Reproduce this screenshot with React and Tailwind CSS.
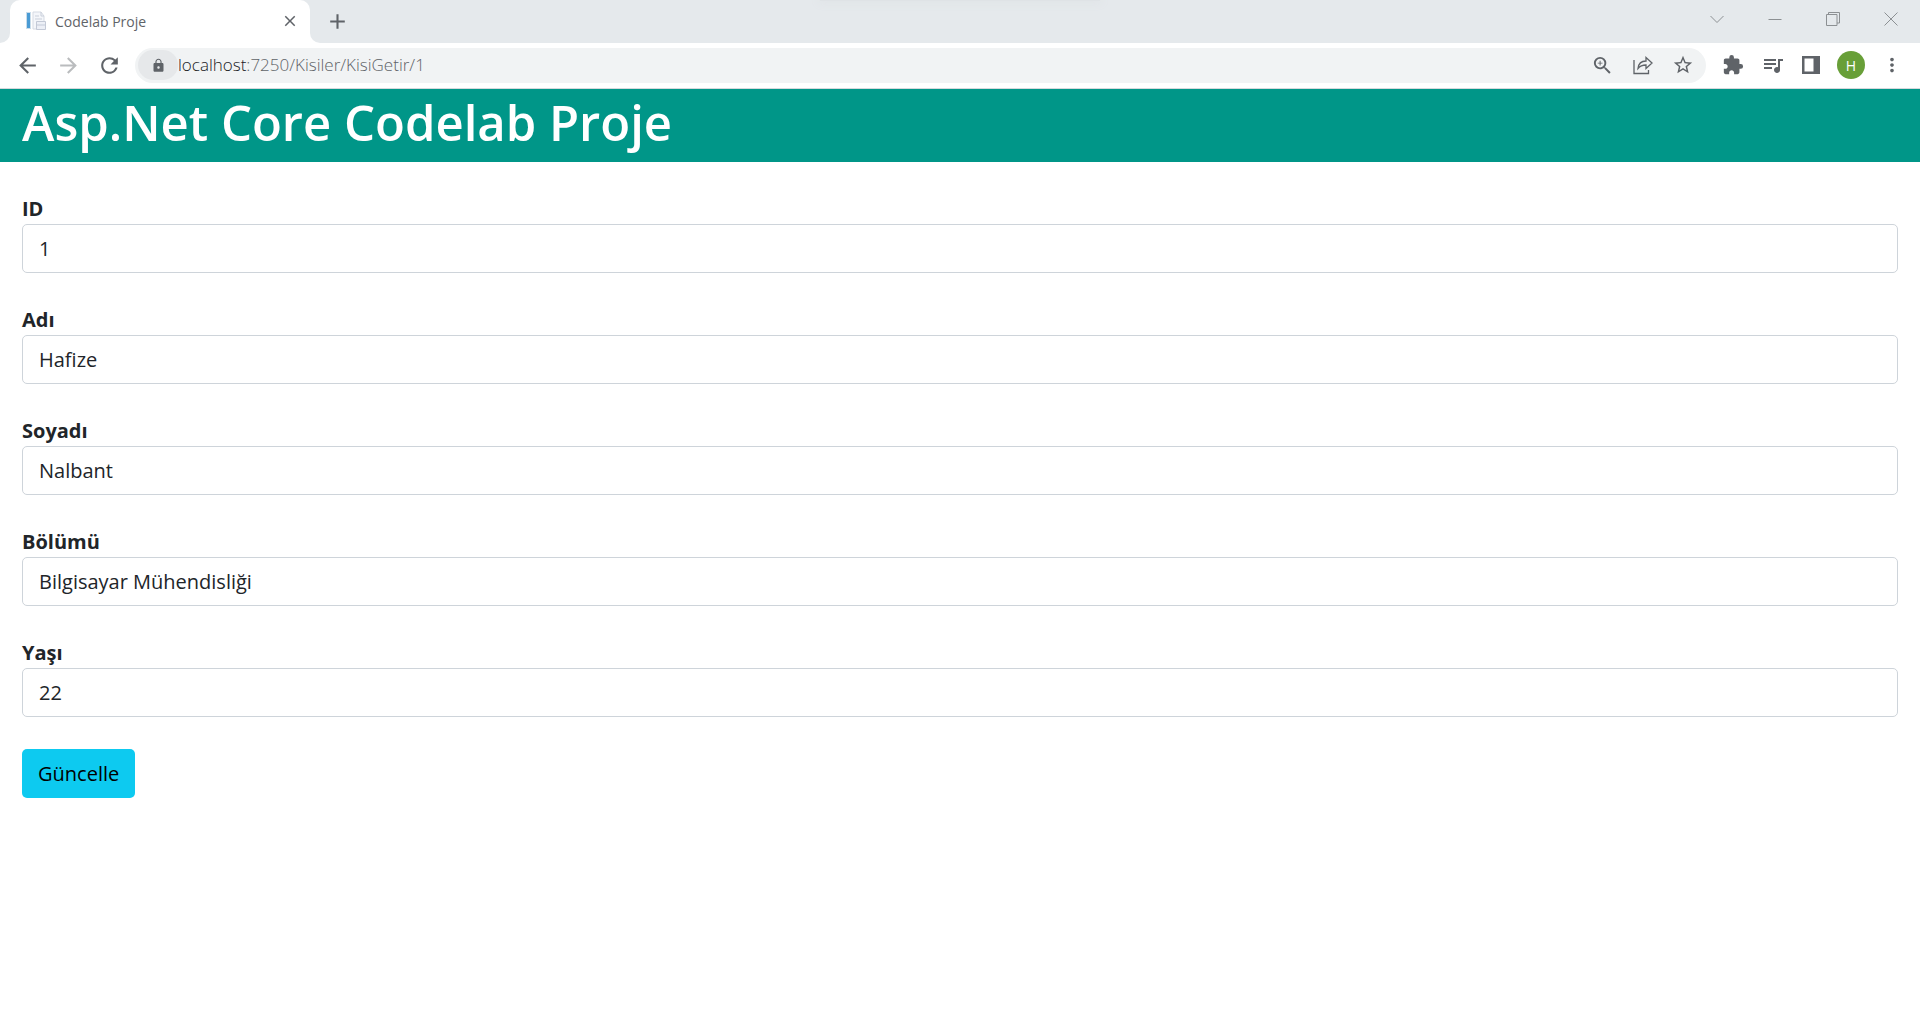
import React from "react";
import {
  MdArrowBack, MdArrowForward, MdRefresh, MdLock, MdZoomIn, MdStarBorder,
  MdExtension, MdQueueMusic, MdMoreVert, MdClose, MdAdd,
} from "react-icons/md";

const fields = [
  { id: "id", label: "ID", value: "1" },
  { id: "adi", label: "Adı", value: "Hafize" },
  { id: "soyadi", label: "Soyadı", value: "Nalbant" },
  { id: "bolumu", label: "Bölümü", value: "Bilgisayar Mühendisliği" },
  { id: "yasi", label: "Yaşı", value: "22" },
];

function Favicon() {
  return (
    <svg className="size-5 shrink-0" viewBox="0 0 20 20" fill="none">
      <rect x="0" y="1" width="5" height="17" fill="#c9dcea" />
      <rect x="1" y="2" width="3" height="15" fill="#4a9bd4" />
      <path d="M7 1h8l3 4v13H7z" fill="#f4f6fa" stroke="#d5dae3" />
      <path d="M15 1v4h3M9 5h4M9 8h7" stroke="#c9cfda" />
      <path d="M10.500 10.500h9v8h-9z" fill="#eceff6" stroke="#c3c9d6" />
      <path d="M11 14h8" stroke="#c3cad8" />
    </svg>
  );
}

function TabStrip() {
  return (
    <div className="flex h-[43px] items-stretch bg-[#e5e9ec]">
      <div className="flex w-[10px] bg-white">
        <div className="w-full rounded-br-[10px] bg-[#e5e9ec]" />
      </div>
      <div className="flex w-[300px] items-center rounded-t-[10px] bg-white pr-[11px] pb-px pl-4">
        <Favicon />
        <span className="ml-[9px] flex-1 text-[14px] text-[#5f6368]">Codelab Proje</span>
        <button aria-label="Sekmeyi kapat" className="text-[#5f6368]"><MdClose size={18} /></button>
      </div>
      <div className="flex w-[10px] bg-white">
        <div className="w-full rounded-bl-[10px] bg-[#e5e9ec]" />
      </div>
      <button aria-label="Yeni sekme" className="ml-[5px] flex items-center pb-px text-[#5f6368]"><MdAdd size={25} /></button>
      <div className="flex flex-1 justify-center pr-[140px]">
        <div className="h-px w-[280px] bg-[#dfe3e6] shadow-[0_0_8px_2px_#dfe3e6]" />
      </div>
      <div className="flex h-[37px] items-center gap-11 pr-[22px] text-[#8c9093]">
        <button aria-label="Sekme ara">
          <svg className="size-[14px]" viewBox="0 0 14 14" fill="none" stroke="currentColor"><path d="M.5 4 7 10.500 13.500 4" /></svg>
        </button>
        <button aria-label="Küçült">
          <svg className="size-[14px]" viewBox="0 0 14 14" fill="none" stroke="currentColor"><path d="M.5 7.500h13" /></svg>
        </button>
        <button aria-label="Geri yükle">
          <svg className="size-[14px]" viewBox="0 0 14 14" fill="none" stroke="currentColor"><path d="M.5 2.500h10.500v11H.5zM2.500 2.500V.5h11v10.500h-2.500" /></svg>
        </button>
        <button aria-label="Kapat">
          <svg className="size-[14px]" viewBox="0 0 14 14" fill="none" stroke="currentColor"><path d="m.5.5 13 13m0-13-13 13" /></svg>
        </button>
      </div>
    </div>
  );
}

function Toolbar() {
  return (
    <div className="flex h-[46px] items-center border-b border-[#d5d9dc] bg-white pr-[17px] pb-px pl-[15px] text-[#5f6368]">
      <div className="flex items-center gap-4">
        <button aria-label="Geri"><MdArrowBack size={25} /></button>
        <button aria-label="İleri" className="text-[#babcbe]"><MdArrowForward size={25} /></button>
        <button aria-label="Yenile"><MdRefresh size={25} /></button>
      </div>
      <div className="ml-[13px] flex h-[35px] flex-1 items-center rounded-full bg-[#f1f3f4] pr-3 pl-[3px]">
        <button aria-label="Site bilgileri" className="flex h-[30px] w-10 items-center justify-center rounded-full bg-[#e6e8ea]"><MdLock size={15} /></button>
        <a href="#" className="flex-1 text-[17px] font-light text-[#5f6368]"><span className="text-[#202124]">localhost</span>:7250/Kisiler/KisiGetir/1</a>
        <div className="flex items-center gap-[18px]">
          <button aria-label="Yakınlaştır"><MdZoomIn size={23} /></button>
          <button aria-label="Paylaş">
            <svg className="size-[22px]" viewBox="0 0 22 22" fill="none" stroke="currentColor" strokeWidth="1.300">
              <path d="M2 6v13.500h14.500V16" />
              <path d="M6 14.500c.5-5 3-7.500 8-7.500V3.500l6 5.500-6 5.500V11c-4 0-6 1-8 3.500z" />
            </svg>
          </button>
          <button aria-label="Yer işareti ekle"><MdStarBorder size={22} /></button>
        </div>
      </div>
      <div className="ml-[16px] flex items-center gap-[17px]">
        <button aria-label="Uzantılar"><MdExtension size={22} /></button>
        <button aria-label="Medya"><MdQueueMusic size={24} /></button>
        <button aria-label="Yan panel">
          <svg className="size-[18px]" viewBox="0 0 18 18" fill="currentColor"><path fillRule="evenodd" d="M0 0h18v18H0zM2.500 2.500v13h9v-13z" /></svg>
        </button>
        <button aria-label="Profil" className="flex size-7 items-center justify-center rounded-full bg-[#689f38] text-[14px] text-white">H</button>
        <button aria-label="Menü" className="-ml-px"><MdMoreVert size={22} /></button>
      </div>
    </div>
  );
}

export default function App() {
  return (
    <div className="min-h-screen bg-white font-['Open_Sans','Noto_Sans',sans-serif] text-[#212529]">
      <TabStrip />
      <Toolbar />
      <header className="bg-[#009688] px-[22px] pb-1.5">
        <h1 className="text-[49px] leading-[67px] font-semibold text-white">Asp.Net Core Codelab Proje</h1>
      </header>
      <form className="px-[22px] pt-8" onSubmit={(e) => e.preventDefault()}>
        {fields.map((f) => (
          <div key={f.id} className="mb-8">
            <label htmlFor={f.id} className="block text-[20px] leading-[30px] font-bold">{f.label}</label>
            <input id={f.id} defaultValue={f.value} className="block h-[49px] w-full rounded-[5px] border border-[#ced4da] bg-white px-4 text-[20px]" />
          </div>
        ))}
        <button type="submit" className="h-[49px] rounded-[5px] bg-[#0dcaf0] px-4 text-[20px] text-black">Güncelle</button>
      </form>
    </div>
  );
}
